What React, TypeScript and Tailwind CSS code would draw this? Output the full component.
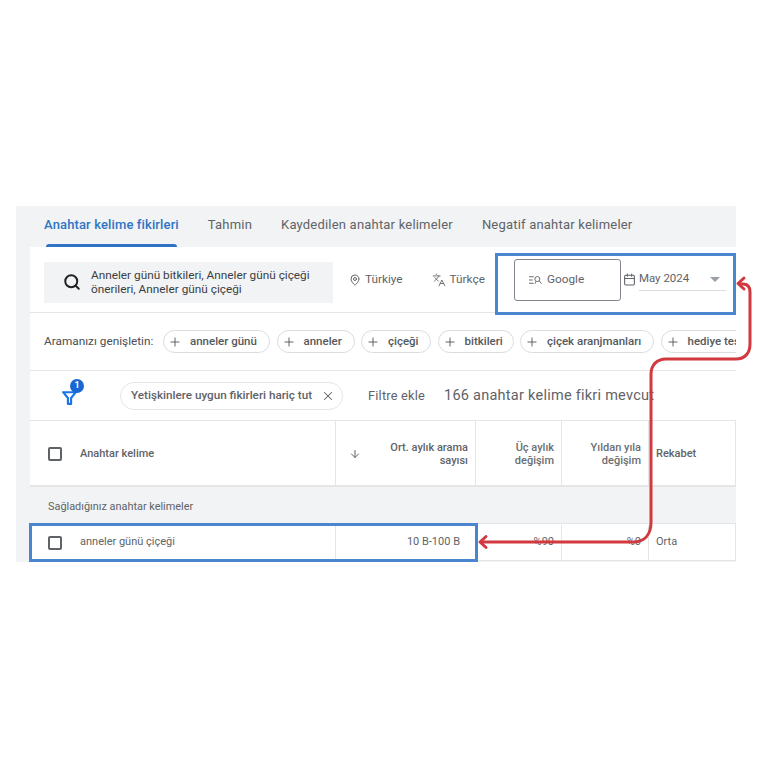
import { ArrowDown, Calendar, Languages, MapPin, Plus, Search, X } from 'lucide-react';

const tabs = ['Tahmin', 'Kaydedilen anahtar kelimeler', 'Negatif anahtar kelimeler'];
const suggestions = [
    { label: 'anneler günü', width: 'w-[107px]' },
    { label: 'anneler', width: 'w-[78px]' },
    { label: 'çiçeği', width: 'w-[70px]' },
    { label: 'bitkileri', width: 'w-[76px]' },
    { label: 'çiçek aranjmanları', width: 'w-[134px]' },
    { label: 'hediye teslimatı', width: 'w-[120px]' },
];

function Checkbox() {
    return <span className="block h-[14px] w-[14px] shrink-0 rounded-[2px] border-2 border-[#5f6368]" />;
}

function Chip({ label, width }: { label: string; width: string }) {
    return (
        <span className={`flex h-[23px] shrink-0 items-center rounded-full border border-[#dadce0] pl-[4px] text-[11.5px] font-medium whitespace-nowrap text-[#55595d] ${width}`}>
            <Plus className="mr-[8px] h-[14px] w-[14px] shrink-0" strokeWidth={1.6} />
            {label}
        </span>
    );
}

function FilterIcon() {
    return (
        <span className="relative block h-[20px] w-[26px]">
            <svg viewBox="0 0 16 16" className="absolute top-[3px] left-0 h-[17px] w-[17px] text-[#1a73e8]" fill="none" stroke="currentColor" strokeWidth="2">
                <path d="M2 3h12L9.5 8.5V14h-3V8.5z" strokeLinejoin="round" />
            </svg>
            <span className="absolute -top-[7px] left-[9px] flex h-[14px] w-[14px] items-center justify-center rounded-full bg-[#1967d2] text-[9px] font-bold text-white">1</span>
        </span>
    );
}

function ProviderIcon() {
    return (
        <svg viewBox="0 0 14 10" className="h-[10px] w-[13px] text-[#5f6368]" fill="none" stroke="currentColor" strokeWidth="1">
            <path d="M0 1.5h5M0 5h4M0 8.5h5" />
            <circle cx="9" cy="4" r="2.7" />
            <path d="M11 6l2.5 3M6.5 9l1-2.5" />
        </svg>
    );
}

function HeaderCell({ lines, width }: { lines: string[]; width: string }) {
    return (
        <div className={`flex h-full shrink-0 flex-col justify-center border-r border-[#e3e5e7] pt-[2px] pr-[7px] text-right text-[11px] leading-[13px] font-medium text-[#6a6e72] ${width}`}>
            {lines.map((line) => (
                <span key={line}>{line}</span>
            ))}
        </div>
    );
}

function Annotations() {
    return (
        <>
            <div className="absolute top-[47px] left-[479px] h-[62px] w-[241px] border-[3px] border-[#4a86cf]" />
            <div className="absolute top-[317px] left-[13px] h-[39px] w-[449px] border-[3px] border-[#4a86cf]" />
        </>
    );
}

function RedArrow() {
    return (
        <svg className="absolute top-[206px] left-[16px] overflow-visible" width="752" height="356" fill="none" stroke="#d1393f" strokeWidth="3">
            <path d="M723 78h4c5 0 7 3 7 8v52c0 9-5 15-14 15h-70c-9 0-15 6-15 15v148c0 12-6 20-18 20H466" />
            <path d="M728 72l-6 5.500 6 5.500" strokeLinecap="round" strokeLinejoin="round" />
            <path d="M470 330.500l-6 5.500 6 5.500" strokeLinecap="round" strokeLinejoin="round" />
        </svg>
    );
}

export default function App() {
    return (
        <main className="relative h-[768px] w-[768px] overflow-hidden bg-white pt-[206px] pl-[16px] font-['Roboto',sans-serif]">
            <div className="relative h-[356px] w-[720px] overflow-hidden bg-[#f1f3f4]">
                <nav className="flex h-[41px] items-center pl-[28px] text-[13px] tracking-[0.2px] text-[#5f6368]">
                    <div className="relative mr-[29px] flex h-full items-center pb-[4px] font-medium tracking-[0.13px] text-[#2f73c5]">
                        Anahtar kelime fikirleri
                        <span className="absolute right-[2px] bottom-0 left-[2px] h-[3px] rounded-t bg-[#2f73c5]" />
                    </div>
                    {tabs.map((tab) => (
                        <span key={tab} className="mr-[29px] mb-[4px]">{tab}</span>
                    ))}
                </nav>

                <div className="ml-[14px] bg-white">
                    <section className="flex h-[66px] items-center border-b border-[#e3e5e7] pl-[14px] text-[11.800px] text-[#5f6368]">
                        <div className="mt-[5px] flex h-[41px] w-[289px] shrink-0 items-center bg-[#f1f3f4] pl-[19px] text-[#3c4043]">
                            <Search className="mr-[10px] h-[18px] w-[18px] shrink-0 text-[#202124]" strokeWidth={2.6} />
                            <p className="leading-[14px]">Anneler günü bitkileri, Anneler günü çiçeği önerileri, Anneler günü çiçeği</p>
                        </div>
                        <MapPin className="ml-[16px] h-[12px] w-[12px] shrink-0" />
                        <span className="ml-[4px]">Türkiye</span>
                        <Languages className="ml-[29px] h-[14px] w-[14px] shrink-0" strokeWidth={1.5} />
                        <span className="ml-[4px]">Türkçe</span>
                        <div className="ml-[29px] flex h-[42px] w-[107px] shrink-0 items-center rounded-[3px] border border-[#80868b] pl-[14px]">
                            <ProviderIcon />
                            <span className="ml-[5px]">Google</span>
                        </div>
                        <Calendar className="ml-[2px] h-[13px] w-[13px] shrink-0" />
                        <div className="ml-[3px] flex h-[22px] w-[87px] shrink-0 items-center justify-between border-b border-[#dadce0] pr-[6px]">
                            <span className="text-[11.500px]">May 2024</span>
                            <span className="h-0 w-0 border-x-[5px] border-t-[5px] border-x-transparent border-t-[#9aa0a6]" />
                        </div>
                    </section>

                    <section className="flex h-[58px] items-center border-b border-[#e3e5e7] pl-[14px] text-[11.800px] text-[#4a4e52]">
                        <span className="mr-[9px] w-[110px] shrink-0 whitespace-nowrap">Aramanızı genişletin:</span>
                        <div className="flex gap-[6.500px]">
                            {suggestions.map((chip) => (
                                <Chip key={chip.label} {...chip} />
                            ))}
                        </div>
                    </section>

                    <section className="flex h-[50px] items-center border-b border-[#e3e5e7] pl-[31px] text-[#5f6368]">
                        <FilterIcon />
                        <span className="ml-[33px] flex h-[28px] w-[223px] items-center justify-between rounded-full border border-[#e3e5e7] pr-[7px] pl-[10px] text-[11.700px] font-medium whitespace-nowrap">
                            Yetişkinlere uygun fikirleri hariç tut
                            <X className="h-[14px] w-[14px]" strokeWidth={1.8} />
                        </span>
                        <span className="ml-[25px] text-[12.800px] tracking-[0.2px]">Filtre ekle</span>
                        <span className="ml-[19px] text-[14.500px] tracking-[0.25px] whitespace-nowrap">166 anahtar kelime fikri mevcut</span>
                    </section>

                    <section className="flex h-[66px] items-center border-r border-b-2 border-[#e3e5e7]">
                        <div className="flex h-full w-[306px] shrink-0 items-center border-r border-[#e3e5e7] pt-[2px] pl-[18px] text-[11px] font-medium text-[#5f6368]">
                            <Checkbox />
                            <span className="ml-[18px]">Anahtar kelime</span>
                        </div>
                        <div className="flex h-full w-[140px] shrink-0 items-center border-r border-[#e3e5e7] pt-[2px]">
                            <ArrowDown className="ml-[13px] h-[12px] w-[12px] shrink-0 text-[#5f6368]" />
                            <div className="flex-1 pr-[7px] text-right text-[11px] leading-[13px] font-medium text-[#5f6368]">
                                <div>Ort. aylık arama</div>
                                <div>sayısı</div>
                            </div>
                        </div>
                        <HeaderCell lines={['Üç aylık', 'değişim']} width="w-[86px]" />
                        <HeaderCell lines={['Yıldan yıla', 'değişim']} width="w-[87px]" />
                        <span className="pt-[2px] pl-[7px] text-[11px] font-medium text-[#5f6368]">Rekabet</span>
                    </section>

                    <div className="flex h-[36px] items-center bg-[#f1f3f4] pt-[4px] pl-[18px] text-[10.900px] text-[#5f6368]">Sağladığınız anahtar kelimeler</div>

                    <section className="flex h-[38px] items-center border-t border-r border-b border-[#e3e5e7] pt-[1px] text-[11px] text-[#5f6368]">
                        <div className="flex h-full w-[306px] shrink-0 items-center border-r border-[#e3e5e7] pl-[18px]">
                            <Checkbox />
                            <span className="ml-[18px]">anneler günü çiçeği</span>
                        </div>
                        <div className="flex h-full w-[140px] shrink-0 items-center justify-end border-r border-[#e3e5e7] pr-[15px]">10 B-100 B</div>
                        <div className="flex h-full w-[86px] shrink-0 items-center justify-end border-r border-[#e3e5e7] pr-[7px]">%90</div>
                        <div className="flex h-full w-[87px] shrink-0 items-center justify-end border-r border-[#e3e5e7] pr-[7px]">%0</div>
                        <span className="pl-[7px]">Orta</span>
                    </section>
                </div>

                <Annotations />
            </div>
            <RedArrow />
        </main>
    );
}
